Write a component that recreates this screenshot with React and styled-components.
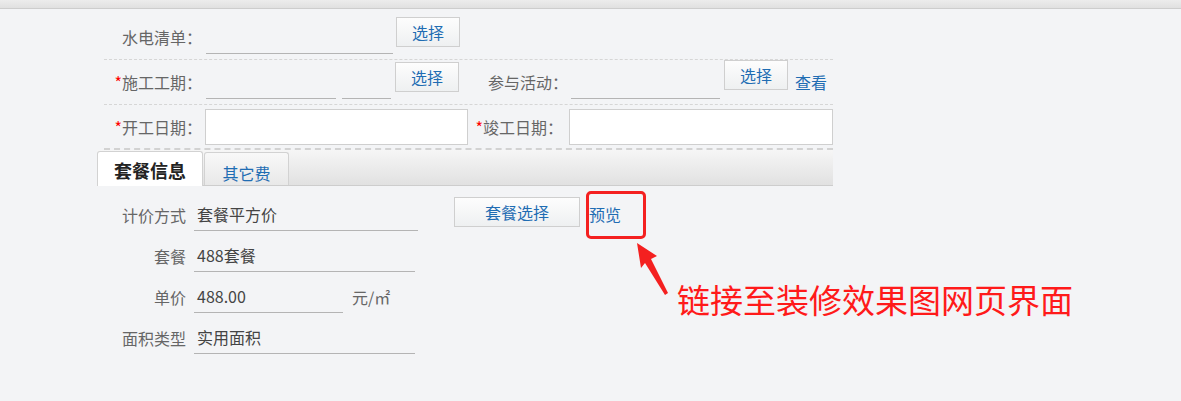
import React from "react";
import styled, { createGlobalStyle } from "styled-components";

const Global = createGlobalStyle`
  body {
    margin: 0;
    background: #f3f4f6;
    font-family: "Noto Sans CJK SC", "Noto Sans", sans-serif;
  }
`;

const Page = styled.div`
  position: relative;
  height: 401px;
  overflow: hidden;
`;

const TopBar = styled.div`
  height: 8px;
  background: linear-gradient(#ececec, #e0e0e0);
  border-bottom: 1px solid #cdcdcd;
`;

const Form = styled.div`
  margin-left: 104px;
  width: 729px;
`;

const FormRow = styled.div`
  display: flex;
  align-items: ${(p) => p.$align || "flex-end"};
  box-sizing: border-box;
  height: ${(p) => p.$h}px;
  padding-bottom: ${(p) => p.$pb || 0}px;
  border-bottom: ${(p) => (p.$thick ? "2px dashed #d2d2d2" : "1px dashed #d6d6d6")};
`;

const Label = styled.div`
  width: ${(p) => (p.$w ? p.$w + "px" : "auto")};
  margin-left: ${(p) => p.$ml || 0}px;
  text-align: right;
  color: #666;
  font-size: 16px;
  line-height: 34px;
  white-space: nowrap;
`;

const Star = styled.span`
  color: #f00;
`;

const LineField = styled.div`
  width: ${(p) => p.$w}px;
  margin-left: ${(p) => p.$ml || 0}px;
  height: 34px;
  box-sizing: border-box;
  border-bottom: 1px solid #b4b4b4;
`;

const BoxInput = styled.div`
  width: ${(p) => p.$w}px;
  margin-left: ${(p) => p.$ml || 0}px;
  height: 36px;
  box-sizing: border-box;
  border: 1px solid #cfcfcf;
  background: #fff;
`;

const Button = styled.button`
  width: ${(p) => p.$w}px;
  height: 30px;
  margin-left: ${(p) => p.$ml || 0}px;
  margin-top: ${(p) => p.$mt || 0}px;
  align-self: flex-start;
  padding: 0;
  box-sizing: border-box;
  border: 1px solid #cfcfcf;
  background: linear-gradient(#fdfdfd, #eef0f1);
  color: #1f6db3;
  font-family: inherit;
  font-size: 16px;
  line-height: 28px;
`;

const Link = styled.span`
  margin-left: ${(p) => p.$ml || 0}px;
  color: #1f6db3;
  font-size: 16px;
  line-height: 34px;
`;

const TabBar = styled.div`
  margin-left: 97px;
  width: 736px;
  height: 36px;
  box-sizing: border-box;
  display: flex;
  align-items: flex-end;
  border-bottom: 1px solid #cdcdcd;
  background: linear-gradient(#f6f6f6, #e1e1e1);
`;

const Tab = styled.div`
  box-sizing: border-box;
  width: ${(p) => (p.$active ? 106 : 85)}px;
  height: ${(p) => (p.$active ? 35 : 33)}px;
  margin-left: ${(p) => (p.$active ? 0 : 1)}px;
  margin-bottom: ${(p) => (p.$active ? -1 : 0)}px;
  border: 1px solid #d2d2d2;
  border-bottom: none;
  border-radius: 3px 3px 0 0;
  background: ${(p) => (p.$active ? "#fff" : "linear-gradient(#f8f8f8, #e8e8e8)")};
  color: ${(p) => (p.$active ? "#222" : "#1f6db3")};
  font-size: ${(p) => (p.$active ? 18 : 16)}px;
  font-weight: ${(p) => (p.$active ? 700 : 400)};
  text-align: center;
  line-height: ${(p) => (p.$active ? 36 : 40)}px;
`;

const Content = styled.div`
  margin-left: 104px;
  padding-top: 12px;
`;

const ContentRow = styled.div`
  display: flex;
  align-items: center;
  height: 33px;
  margin-bottom: 8px;
`;

const CLabel = styled.div`
  width: 82px;
  text-align: right;
  color: #666;
  font-size: 16px;
`;

const Value = styled.div`
  width: ${(p) => p.$w}px;
  margin-left: 8px;
  height: 33px;
  box-sizing: border-box;
  padding-left: 3px;
  border-bottom: 1px solid #b4b4b4;
  color: #444;
  font-size: 16px;
  line-height: 32px;
`;

const Unit = styled.span`
  margin-left: 9px;
  color: #666;
  font-size: 16px;
`;

const Preview = styled.span`
  position: relative;
  margin-left: 9px;
  color: #1f6db3;
  font-size: 16px;
  line-height: 33px;
  &::after {
    content: "";
    position: absolute;
    left: -3px;
    top: -7px;
    width: 60px;
    height: 48px;
    box-sizing: border-box;
    border: 3px solid #f42020;
    border-radius: 5px;
  }
`;

const Note = styled.div`
  position: absolute;
  left: 677px;
  top: 283px;
  color: #ff1a1a;
  font-size: 33px;
  line-height: 33px;
  white-space: nowrap;
`;

const Arrow = styled.svg`
  position: absolute;
  left: 630px;
  top: 238px;
`;

export default function App() {
  return (
    <Page>
      <Global />
      <TopBar />
      <Form>
        <FormRow $h={51} $pb={5}>
          <Label $w={98}>水电清单：</Label>
          <LineField $w={187} $ml={4} />
          <Button $w={64} $ml={3} $mt={8}>选择</Button>
        </FormRow>
        <FormRow $h={45} $pb={5}>
          <Label $w={98}><Star>*</Star>施工工期：</Label>
          <LineField $w={130} $ml={4} />
          <LineField $w={49} $ml={6} />
          <Button $w={64} $ml={4} $mt={2}>选择</Button>
          <Label $ml={29}>参与活动：</Label>
          <LineField $w={149} $ml={3} />
          <Button $w={64} $ml={4}>选择</Button>
          <Link $ml={7}>查看</Link>
        </FormRow>
        <FormRow $h={45} $align="center" $thick>
          <Label $w={98}><Star>*</Star>开工日期：</Label>
          <BoxInput $w={263} $ml={3} />
          <Label $w={89} $ml={6}><Star>*</Star>竣工日期：</Label>
          <BoxInput $w={264} $ml={6} />
        </FormRow>
      </Form>
      <TabBar>
        <Tab $active>套餐信息</Tab>
        <Tab>其它费</Tab>
      </TabBar>
      <Content>
        <ContentRow>
          <CLabel>计价方式</CLabel>
          <Value $w={224}>套餐平方价</Value>
          <Button $w={126} $ml={36} $mt={-1}>套餐选择</Button>
          <Preview>预览</Preview>
        </ContentRow>
        <ContentRow>
          <CLabel>套餐</CLabel>
          <Value $w={221}>488套餐</Value>
        </ContentRow>
        <ContentRow>
          <CLabel>单价</CLabel>
          <Value $w={149}>488.00</Value>
          <Unit>元/㎡</Unit>
        </ContentRow>
        <ContentRow>
          <CLabel>面积类型</CLabel>
          <Value $w={221}>实用面积</Value>
        </ContentRow>
      </Content>
      <Arrow width="45" height="62" viewBox="630 238 45 62">
        <polygon
          points="637,243 657,256 651,259 668,293 665,295 645,263 641,268"
          fill="#f42020"
        />
      </Arrow>
      <Note>链接至装修效果图网页界面</Note>
    </Page>
  );
}
